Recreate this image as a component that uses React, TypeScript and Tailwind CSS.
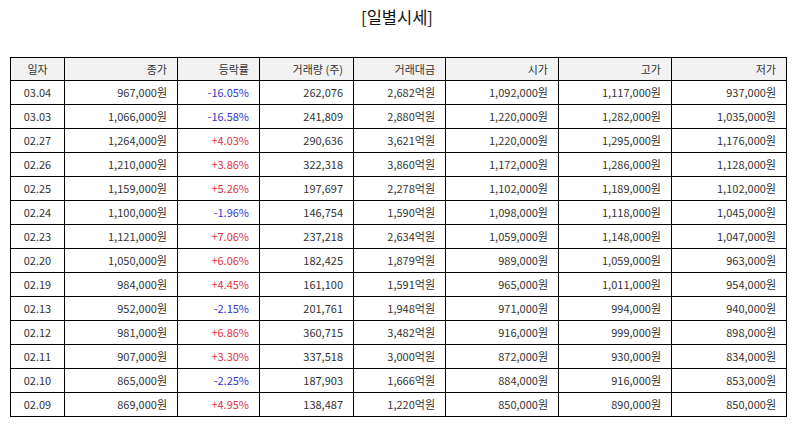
import React from "react";

const rows: [string, string, string, string, string, string, string, string][] = [
  ["03.04", "967,000원", "-16.05%", "262,076", "2,682억원", "1,092,000원", "1,117,000원", "937,000원"],
  ["03.03", "1,066,000원", "-16.58%", "241,809", "2,880억원", "1,220,000원", "1,282,000원", "1,035,000원"],
  ["02.27", "1,264,000원", "+4.03%", "290,636", "3,621억원", "1,220,000원", "1,295,000원", "1,176,000원"],
  ["02.26", "1,210,000원", "+3.86%", "322,318", "3,860억원", "1,172,000원", "1,286,000원", "1,128,000원"],
  ["02.25", "1,159,000원", "+5.26%", "197,697", "2,278억원", "1,102,000원", "1,189,000원", "1,102,000원"],
  ["02.24", "1,100,000원", "-1.96%", "146,754", "1,590억원", "1,098,000원", "1,118,000원", "1,045,000원"],
  ["02.23", "1,121,000원", "+7.06%", "237,218", "2,634억원", "1,059,000원", "1,148,000원", "1,047,000원"],
  ["02.20", "1,050,000원", "+6.06%", "182,425", "1,879억원", "989,000원", "1,059,000원", "963,000원"],
  ["02.19", "984,000원", "+4.45%", "161,100", "1,591억원", "965,000원", "1,011,000원", "954,000원"],
  ["02.13", "952,000원", "-2.15%", "201,761", "1,948억원", "971,000원", "994,000원", "940,000원"],
  ["02.12", "981,000원", "+6.86%", "360,715", "3,482억원", "916,000원", "999,000원", "898,000원"],
  ["02.11", "907,000원", "+3.30%", "337,518", "3,000억원", "872,000원", "930,000원", "834,000원"],
  ["02.10", "865,000원", "-2.25%", "187,903", "1,666억원", "884,000원", "916,000원", "853,000원"],
  ["02.09", "869,000원", "+4.95%", "138,487", "1,220억원", "850,000원", "890,000원", "850,000원"],
];

const headers = ["일자", "종가", "등락률", "거래량 (주)", "거래대금", "시가", "고가", "저가"];
const widths = ["w-[54px]", "w-[113px]", "w-[82px]", "w-[94px]", "w-[92px]", "w-[113px]", "w-[113px]", "w-[115px]"];

export default function App() {
  return (
    <div className="w-[794px] h-[425px] bg-white text-[#333] font-['Noto_Sans_CJK_KR','Noto_Sans',sans-serif] overflow-hidden">
      <h1 className="pt-[3px] h-[57px] text-center text-[16.5px] leading-[28px] text-[#111]">[일별시세]</h1>
      <table className="ml-[10px] w-[776px] table-fixed border-collapse border-[1.5px] border-black text-[11px]">
        <colgroup>
          {widths.map((w, i) => <col key={i} className={w} />)}
        </colgroup>
        <thead>
          <tr className="h-[23px] bg-[#f2f2f2]">
            {headers.map((h, i) => (
              <th key={i} className={`border-[1.5px] border-black font-normal p-0 ${i === 0 ? "text-center" : "text-right pr-[10px]"}`}>{h}</th>
            ))}
          </tr>
        </thead>
        <tbody>
          {rows.map((r, ri) => (
            <tr key={ri} className="h-[24px]">
              {r.map((c, ci) => (
                <td
                  key={ci}
                  className={`border-[1.5px] border-black p-0 ${ci === 0 ? "text-center" : "text-right pr-[10px]"} ${ci === 2 ? (c.startsWith("-") ? "text-[#3535d0]" : "text-[#e3303c]") : ""}`}
                >
                  {c}
                </td>
              ))}
            </tr>
          ))}
        </tbody>
      </table>
    </div>
  );
}
